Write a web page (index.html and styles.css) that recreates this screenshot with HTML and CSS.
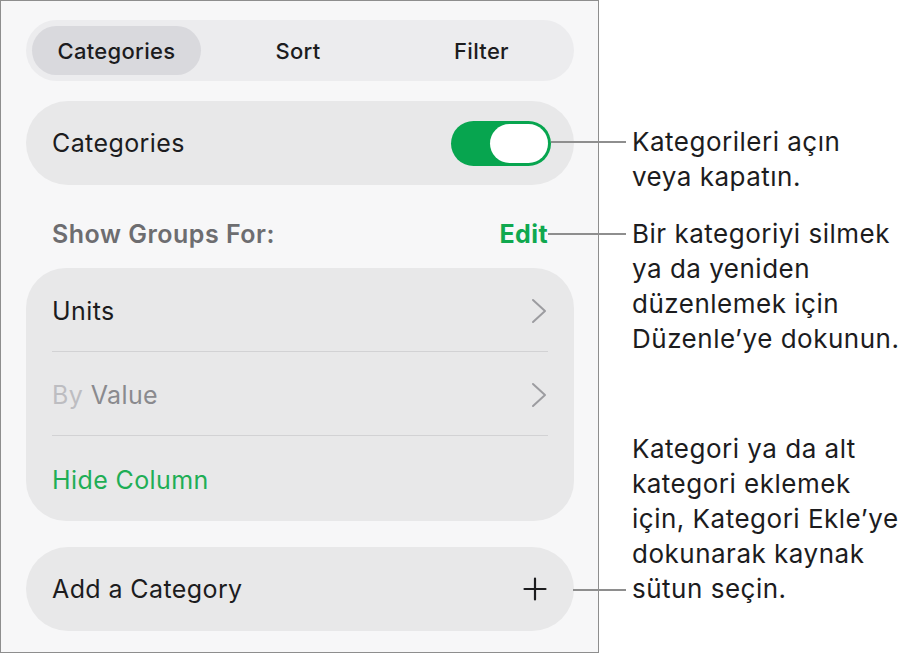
FILE: index.html
```html
<!DOCTYPE html>
<html lang="tr">
<head>
<meta charset="utf-8">
<title>Categories</title>
<link rel="stylesheet" href="styles.css">
</head>
<body>
<div class="figure">
  <div class="panel">
    <div class="segmented">
      <div class="seg seg-on">Categories</div>
      <div class="seg">Sort</div>
      <div class="seg">Filter</div>
    </div>

    <div class="pill-row">
      <span class="label">Categories</span>
      <div class="toggle"><div class="knob"></div></div>
    </div>

    <div class="section-head">
      <span class="section-title">Show Groups For:</span>
      <span class="edit">Edit</span>
    </div>

    <div class="group">
      <div class="row">
        <span class="label">Units</span>
        <svg class="chev" width="16" height="26" viewBox="0 0 16 26"><path d="M2 2 L14 13 L2 24" fill="none" stroke="#9c9ca0" stroke-width="2" stroke-linecap="round" stroke-linejoin="round"/></svg>
      </div>
      <div class="sep"></div>
      <div class="row">
        <span class="label muted"><span class="faint">By</span> Value</span>
        <svg class="chev" width="16" height="26" viewBox="0 0 16 26"><path d="M2 2 L14 13 L2 24" fill="none" stroke="#9c9ca0" stroke-width="2" stroke-linecap="round" stroke-linejoin="round"/></svg>
      </div>
      <div class="sep"></div>
      <div class="row row-last">
        <span class="label green">Hide Column</span>
      </div>
    </div>

    <div class="pill-row add-row">
      <span class="label">Add a Category</span>
      <svg class="plus" width="24" height="24" viewBox="0 0 24 24"><path d="M12 1.5 V22.5 M1.5 12 H22.5" fill="none" stroke="#1c1c1e" stroke-width="2.2" stroke-linecap="round"/></svg>
    </div>
  </div>

  <div class="notes">
    <p class="note note1">Kategorileri açın<br>veya kapatın.</p>
    <p class="note note2">Bir kategoriyi silmek<br>ya da yeniden<br>düzenlemek için<br>Düzenle’ye dokunun.</p>
    <p class="note note3">Kategori ya da alt<br>kategori eklemek<br>için, Kategori Ekle’ye<br>dokunarak kaynak<br>sütun seçin.</p>
  </div>

  <div class="leader leader1"></div>
  <div class="leader leader2"></div>
  <div class="leader leader3"></div>
</div>
</body>
</html>
```

FILE: styles.css
```css
* { box-sizing: border-box; }

html, body {
  margin: 0;
  padding: 0;
  background: #ffffff;
}

body {
  font-family: Inter, "Noto Sans", "Liberation Sans", sans-serif;
  color: #1c1c1e;
}

.figure {
  position: relative;
  display: flex;
  width: 918px;
  height: 654px;
}

.panel {
  width: 599px;
  height: 653px;
  border: 1px solid #8e8e8e;
  background: #f7f7f8;
  padding: 19px 24px 0 25px;
  display: flex;
  flex-direction: column;
}

/* segmented control */
.segmented {
  height: 61px;
  border-radius: 31px;
  background: #ececee;
  padding: 6px;
  display: grid;
  grid-template-columns: 169px 194px 1fr;
}

.seg {
  display: flex;
  align-items: center;
  justify-content: center;
  font-size: 22px;
  font-weight: 500;
  letter-spacing: 0.3px;
  color: #1c1c1e;
  border-radius: 25px;
}

.seg-on {
  background: #d9d9dd;
}

/* pill rows */
.pill-row {
  margin-top: 20px;
  height: 84px;
  border-radius: 42px;
  background: #e8e8e9;
  padding: 0 23px 0 26px;
  display: flex;
  align-items: center;
  justify-content: space-between;
}

.label {
  font-size: 25px;
  letter-spacing: 0.4px;
  color: #1c1c1e;
}

.toggle {
  width: 100px;
  height: 45px;
  border-radius: 23px;
  background: #07a54f;
  display: flex;
  align-items: center;
  justify-content: flex-end;
  padding-right: 3px;
}

.knob {
  width: 58px;
  height: 39px;
  border-radius: 20px;
  background: #ffffff;
}

/* section header */
.section-head {
  margin-top: 30px;
  height: 38px;
  margin-bottom: 15px;
  padding: 0 26px 0 26px;
  display: flex;
  align-items: center;
  justify-content: space-between;
}

.section-title {
  font-size: 25px;
  font-weight: 600;
  letter-spacing: 0.5px;
  color: #6d6d70;
}

.edit {
  font-size: 25px;
  font-weight: 700;
  letter-spacing: 0.4px;
  color: #10a84f;
}

/* grouped list */
.group {
  background: #e8e8e9;
  border-radius: 40px;
  padding: 0 26px;
}

.row {
  height: 83px;
  padding-top: 2px;
  display: flex;
  align-items: center;
  justify-content: space-between;
  padding-right: 1px;
}

.row-last {
  height: 85px;
}

.sep {
  height: 1px;
  background: #d2d2d4;
}

.muted { color: #8a8a8e; }
.faint { color: #bdbdc1; }
.green { color: #1fae56; }

.chev { display: block; }

.add-row {
  margin-top: 26px;
  padding-right: 27px;
}

.plus { display: block; }

/* callout notes */
.notes {
  padding-left: 33px;
  padding-top: 124px;
}

.note {
  margin: 0;
  font-size: 26px;
  line-height: 35px;
  letter-spacing: 0.5px;
  color: #1c1c1e;
  white-space: nowrap;
}

.note2 { margin-top: 22px; }
.note3 { margin-top: 75px; }

/* leader lines */
.leader {
  position: absolute;
  height: 2px;
  background: #8e8e8e;
}

.leader1 { left: 551px; width: 75px; top: 141px; }
.leader2 { left: 548px; width: 78px; top: 233px; }
.leader3 { left: 573px; width: 53px; top: 589px; }
```
